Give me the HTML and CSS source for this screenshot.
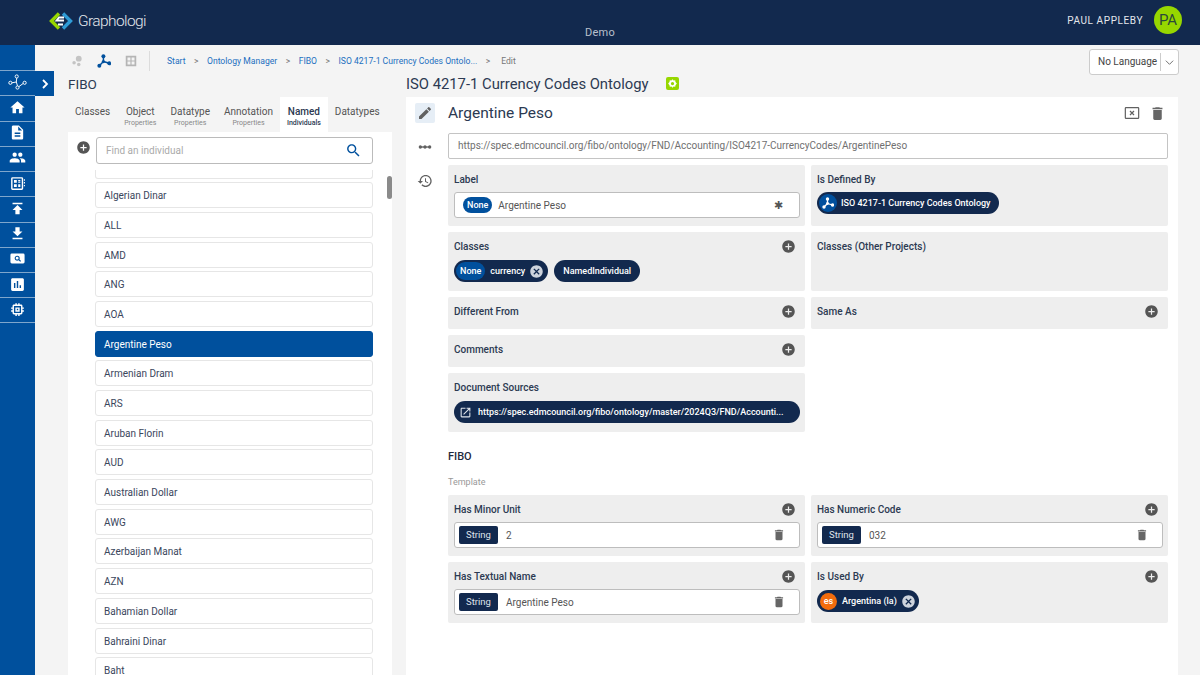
FILE: index.html
```html
<!DOCTYPE html>
<html lang="en">
<head>
  <meta charset="UTF-8">
  <meta name="viewport" content="width=device-width, initial-scale=1">
  <title>Graphologi</title>
  <link rel="stylesheet" href="styles.css">
</head>
<body>
  <svg class="icon-defs" xmlns="http://www.w3.org/2000/svg">
    <symbol id="i-add" viewBox="0 0 24 24"><path d="M12 2C6.48 2 2 6.48 2 12s4.48 10 10 10 10-4.48 10-10S17.52 2 12 2zm5 11h-4v4h-2v-4H7v-2h4V7h2v4h4v2z"/></symbol>
    <symbol id="i-home" viewBox="0 0 24 24"><path d="M10 20v-6h4v6h5v-8h3L12 3 2 12h3v8z"/></symbol>
    <symbol id="i-doc" viewBox="0 0 24 24"><path d="M14 2H6c-1.1 0-1.99.9-1.99 2L4 20c0 1.1.89 2 1.99 2H18c1.1 0 2-.9 2-2V8l-6-6zm2 16H8v-2h8v2zm0-4H8v-2h8v2zm-3-5V3.5L18.5 9H13z"/></symbol>
    <symbol id="i-people" viewBox="0 0 24 24"><path d="M16 11c1.66 0 2.99-1.34 2.99-3S17.66 5 16 5c-1.66 0-3 1.34-3 3s1.34 3 3 3zm-8 0c1.66 0 2.99-1.34 2.99-3S9.66 5 8 5C6.34 5 5 6.34 5 8s1.34 3 3 3zm0 2c-2.33 0-7 1.17-7 3.5V19h14v-2.5c0-2.33-4.67-3.5-7-3.5zm8 0c-.29 0-.62.02-.97.05 1.16.84 1.97 1.97 1.97 3.45V19h6v-2.5c0-2.33-4.67-3.5-7-3.5z"/></symbol>
    <symbol id="i-up" viewBox="0 0 24 24"><path d="M5 4v2h14V4H5zm0 10h4v6h6v-6h4l-7-7-7 7z"/></symbol>
    <symbol id="i-down" viewBox="0 0 24 24"><path d="M19 9h-4V3H9v6H5l7 7 7-7zM5 18v2h14v-2H5z"/></symbol>
    <symbol id="i-chart" viewBox="0 0 24 24"><path d="M19 3H5c-1.1 0-2 .9-2 2v14c0 1.1.9 2 2 2h14c1.1 0 2-.9 2-2V5c0-1.1-.9-2-2-2zM9 17H7v-7h2v7zm4 0h-2V7h2v10zm4 0h-2v-4h2v4z"/></symbol>
    <symbol id="i-chip" viewBox="0 0 24 24"><path d="M15 9H9v6h6V9zm-2 4h-2v-2h2v2zm8-2V9h-2V7c0-1.1-.9-2-2-2h-2V3h-2v2h-2V3H9v2H7c-1.1 0-2 .9-2 2v2H3v2h2v2H3v2h2v2c0 1.1.9 2 2 2h2v2h2v-2h2v2h2v-2h2c1.1 0 2-.9 2-2v-2h2v-2h-2v-2h2zm-4 6H7V7h10v10z"/></symbol>
    <symbol id="i-search" viewBox="0 0 24 24"><path d="M15.5 14h-.79l-.28-.27C15.41 12.59 16 11.11 16 9.5 16 5.91 13.09 3 9.5 3S3 5.91 3 9.5 5.91 16 9.5 16c1.61 0 3.09-.59 4.23-1.57l.27.28v.79l5 4.99L20.49 19l-4.99-5zm-6 0C7.01 14 5 11.99 5 9.5S7.01 5 9.5 5 14 7.01 14 9.5 11.99 14 9.5 14z"/></symbol>
    <symbol id="i-edit" viewBox="0 0 24 24"><path d="M3 17.25V21h3.75L17.81 9.94l-3.75-3.75L3 17.25zM20.71 7.04c.39-.39.39-1.02 0-1.41l-2.34-2.34c-.39-.39-1.02-.39-1.41 0l-1.83 1.83 3.75 3.75 1.83-1.83z"/></symbol>
    <symbol id="i-history" viewBox="0 0 24 24"><path d="M13 3c-4.97 0-9 4.03-9 9H1l3.89 3.89.07.14L9 12H6c0-3.87 3.13-7 7-7s7 3.13 7 7-3.13 7-7 7c-1.93 0-3.68-.79-4.94-2.06l-1.42 1.42C8.27 19.99 10.51 21 13 21c4.97 0 9-4.03 9-9s-4.03-9-9-9zm-1 5v5l4.28 2.54.72-1.21-3.5-2.08V8H12z"/></symbol>
    <symbol id="i-trash" viewBox="0 0 24 24"><path d="M6 19c0 1.1.9 2 2 2h8c1.1 0 2-.9 2-2V7H6v12zM19 4h-3.5l-1-1h-5l-1 1H5v2h14V4z"/></symbol>
    <symbol id="i-cancel" viewBox="0 0 24 24"><path d="M12 2C6.47 2 2 6.47 2 12s4.47 10 10 10 10-4.47 10-10S17.53 2 12 2zm5 13.59L15.59 17 12 13.41 8.41 17 7 15.59 10.59 12 7 8.41 8.41 7 12 10.59 15.59 7 17 8.41 13.41 12 17 15.59z"/></symbol>
    <symbol id="i-open" viewBox="0 0 24 24"><path d="M19 19H5V5h7V3H5c-1.11 0-2 .9-2 2v14c0 1.1.89 2 2 2h14c1.1 0 2-.9 2-2v-7h-2v7zM14 3v2h3.59l-9.83 9.83 1.41 1.41L19 6.41V10h2V3h-7z"/></symbol>
    <symbol id="i-graph" viewBox="0 0 24 24"><path d="M11 13L11 4M11 13L4 20M11 13L21 16" stroke="currentColor" stroke-width="2.6" fill="none"/><circle cx="11" cy="4" r="3.4"/><circle cx="4" cy="20" r="3.4"/><circle cx="21" cy="16" r="3.4"/><circle cx="11" cy="13" r="2.8"/></symbol>
  </svg>

  <header class="topbar">
    <div class="brand">
      <svg class="logo line" viewBox="0 0 24 20">
        <path d="M10 2.5L2.5 10l7.5 7.5" stroke="#97d700" stroke-width="3.4"/>
        <path d="M14 2.5L21.5 10 14 17.5" stroke="#2f9bd6" stroke-width="3.4"/>
        <path d="M15 6.5H10L7.5 9.5H15M9 13.5H14" stroke="#ffffff" stroke-width="1.8"/>
      </svg>
      <span class="brand-name">Graphologi</span>
    </div>
    <div class="project">Demo</div>
    <div class="user">
      <span class="user-name">PAUL APPLEBY</span>
      <span class="avatar">PA</span>
    </div>
  </header>

  <div class="layout">
    <nav class="sidebar">
      <a class="side-item">
        <svg class="side-ontology line" viewBox="0 0 24 20" stroke="#fff" stroke-width="1.2"><circle cx="11" cy="3" r="2"/><circle cx="3" cy="11" r="2"/><circle cx="12" cy="17" r="2"/><circle cx="21" cy="11" r="2"/><path d="M11 5l-.5 5L5 11M10.500 10L12 15M13.500 16L19 12"/></svg>
        <span class="side-expand"><svg class="line" viewBox="0 0 12 12" stroke="#fff" stroke-width="1.8"><path d="M4 2l4 4-4 4"/></svg></span>
      </a>
      <a class="side-item"><svg><use href="#i-home"/></svg></a>
      <a class="side-item"><svg><use href="#i-doc"/></svg></a>
      <a class="side-item"><svg><use href="#i-people"/></svg></a>
      <a class="side-item">
        <svg viewBox="0 0 24 24"><path fill-rule="evenodd" d="M5 3h13a2 2 0 012 2v14a2 2 0 01-2 2H5a2 2 0 01-2-2V5a2 2 0 012-2zm0 2v14h13V5H5zm2 2h4v4H7V7zm6 0h3v2h-3V7zm0 3h3v1h-3v-1zm-6 3h4v4H7v-4zm6 0h3v4h-3v-4zm8-7h1.500v2H21V6zm0 4h1.500v2H21v-2zm0 4h1.500v2H21v-2z"/></svg>
      </a>
      <a class="side-item"><svg><use href="#i-up"/></svg></a>
      <a class="side-item"><svg><use href="#i-down"/></svg></a>
      <a class="side-item">
        <svg viewBox="0 0 24 24"><path fill-rule="evenodd" d="M4 5h16a2 2 0 012 2v10a2 2 0 01-2 2H4a2 2 0 01-2-2V7a2 2 0 012-2zm7.500 3a3.500 3.500 0 102 6.400l2.300 2.300 1.200-1.200-2.300-2.300A3.500 3.500 0 0011.500 8zm0 1.500a2 2 0 110 4 2 2 0 010-4z"/></svg>
      </a>
      <a class="side-item"><svg><use href="#i-chart"/></svg></a>
      <a class="side-item"><svg><use href="#i-chip"/></svg></a>
    </nav>

    <div class="content">
      <div class="toolbar">
        <div class="view-icons">
          <svg class="view-icon" viewBox="0 0 24 24"><circle cx="15" cy="8" r="5" fill="#c4c4c4"/><circle cx="7" cy="15" r="3" fill="#c4c4c4"/><circle cx="15" cy="18" r="3" fill="#c4c4c4"/></svg>
          <svg class="view-icon active"><use href="#i-graph"/></svg>
          <svg class="view-icon" viewBox="0 0 24 24"><path fill="#b5b5b5" fill-rule="evenodd" d="M3 3h18v18H3V3zm3 3v5h5V6H6zm7 0v5h5V6h-5zm-7 7v5h5v-5H6zm7 0v5h5v-5h-5z"/></svg>
        </div>
        <ol class="crumbs">
          <li><a>Start</a></li>
          <li><a>Ontology Manager</a></li>
          <li><a>FIBO</a></li>
          <li><a>ISO 4217-1 Currency Codes Ontolo...</a></li>
          <li class="current">Edit</li>
        </ol>
        <div class="lang-select">
          <span class="lang-value">No Language</span>
          <svg class="line" viewBox="0 0 12 12" stroke="#666" stroke-width="1"><path d="M2 4l4 4 4-4"/></svg>
        </div>
      </div>

      <div class="columns">
        <section class="left">
          <h2 class="panel-title left-title">FIBO</h2>
          <div class="tabs">
            <div class="tab">Classes</div>
            <div class="tab">Object<small>Properties</small></div>
            <div class="tab">Datatype<small>Properties</small></div>
            <div class="tab">Annotation<small>Properties</small></div>
            <div class="tab active">Named<small>Individuals</small></div>
            <div class="tab">Datatypes</div>
          </div>
          <div class="list-panel">
            <div class="search-row">
              <svg class="add-icon"><use href="#i-add"/></svg>
              <div class="search-box">
                <span>Find an individual</span>
                <svg><use href="#i-search"/></svg>
              </div>
            </div>
            <div class="list-scroll">
              <ul class="list">
                <li></li>
                <li>Algerian Dinar</li>
                <li>ALL</li>
                <li>AMD</li>
                <li>ANG</li>
                <li>AOA</li>
                <li class="selected">Argentine Peso</li>
                <li>Armenian Dram</li>
                <li>ARS</li>
                <li>Aruban Florin</li>
                <li>AUD</li>
                <li>Australian Dollar</li>
                <li>AWG</li>
                <li>Azerbaijan Manat</li>
                <li>AZN</li>
                <li>Bahamian Dollar</li>
                <li>Bahraini Dinar</li>
                <li>Baht</li>
              </ul>
              <div class="scroll-thumb"></div>
            </div>
          </div>
        </section>

        <section class="right">
          <div class="title-row">
            <h2 class="panel-title">ISO 4217-1 Currency Codes Ontology</h2>
            <span class="green-badge"><svg viewBox="0 0 24 24"><path fill="#fff" fill-rule="evenodd" d="M12 4l2 2.500 3-.5.500 3 2.500 3-2.500 3-.500 3-3-.5L12 20l-2-2.500-3 .5-.500-3L4 12l2.500-3 .500-3 3 .5L12 4zm0 5a3 3 0 100 6 3 3 0 000-6z"/></svg></span>
          </div>
          <div class="editor">
            <div class="rail">
              <span class="rail-btn active"><svg><use href="#i-edit"/></svg></span>
              <span class="rail-btn"><svg viewBox="0 0 24 24"><circle cx="5" cy="12" r="2.500"/><circle cx="12" cy="12" r="2.500"/><circle cx="19" cy="12" r="2.500"/><path d="M5 11h14v2H5z"/></svg></span>
              <span class="rail-btn"><svg><use href="#i-history"/></svg></span>
            </div>
            <div class="form">
              <div class="form-head">
                <h1>Argentine Peso</h1>
                <svg class="close-box line" viewBox="0 0 24 24" stroke="#616161" stroke-width="1.800"><rect x="2" y="4" width="20" height="16" rx="1"/><path d="M9 9l6 6M15 9l-6 6"/></svg>
                <svg class="trash big"><use href="#i-trash"/></svg>
              </div>
              <div class="iri">https://spec.edmcouncil.org/fibo/ontology/FND/Accounting/ISO4217-CurrencyCodes/ArgentinePeso</div>

              <div class="card-grid">
                <div class="card">
                  <div class="card-head">Label</div>
                  <div class="value-box">
                    <span class="pill none">None</span>
                    <span class="value-text">Argentine Peso</span>
                    <span class="star">✱</span>
                  </div>
                </div>
                <div class="card">
                  <div class="card-head">Is Defined By</div>
                  <div class="chips tight">
                    <span class="chip has-icon"><span class="chip-graph"><svg><use href="#i-graph"/></svg></span>ISO 4217-1 Currency Codes Ontology</span>
                  </div>
                </div>
                <div class="card">
                  <div class="card-head">Classes<svg class="add-icon"><use href="#i-add"/></svg></div>
                  <div class="chips">
                    <span class="chip has-none"><span class="pill none">None</span>currency<svg class="chip-x"><use href="#i-cancel"/></svg></span>
                    <span class="chip">NamedIndividual</span>
                  </div>
                </div>
                <div class="card">
                  <div class="card-head">Classes (Other Projects)</div>
                </div>
                <div class="card">
                  <div class="card-head">Different From<svg class="add-icon"><use href="#i-add"/></svg></div>
                </div>
                <div class="card">
                  <div class="card-head">Same As<svg class="add-icon"><use href="#i-add"/></svg></div>
                </div>
                <div class="card">
                  <div class="card-head">Comments<svg class="add-icon"><use href="#i-add"/></svg></div>
                </div>
                <div></div>
                <div class="card">
                  <div class="card-head">Document Sources</div>
                  <div class="chips">
                    <span class="chip wide"><svg class="chip-open"><use href="#i-open"/></svg>https://spec.edmcouncil.org/fibo/ontology/master/2024Q3/FND/Accounti...</span>
                  </div>
                </div>
              </div>

              <h3 class="section-title">FIBO</h3>
              <div class="section-sub">Template</div>

              <div class="card-grid">
                <div class="card">
                  <div class="card-head">Has Minor Unit<svg class="add-icon"><use href="#i-add"/></svg></div>
                  <div class="value-box">
                    <span class="type-tag">String</span>
                    <span class="value-text">2</span>
                    <svg class="trash"><use href="#i-trash"/></svg>
                  </div>
                </div>
                <div class="card">
                  <div class="card-head">Has Numeric Code<svg class="add-icon"><use href="#i-add"/></svg></div>
                  <div class="value-box">
                    <span class="type-tag">String</span>
                    <span class="value-text">032</span>
                    <svg class="trash"><use href="#i-trash"/></svg>
                  </div>
                </div>
                <div class="card">
                  <div class="card-head">Has Textual Name<svg class="add-icon"><use href="#i-add"/></svg></div>
                  <div class="value-box">
                    <span class="type-tag">String</span>
                    <span class="value-text">Argentine Peso</span>
                    <svg class="trash"><use href="#i-trash"/></svg>
                  </div>
                </div>
                <div class="card">
                  <div class="card-head">Is Used By<svg class="add-icon"><use href="#i-add"/></svg></div>
                  <div class="chips">
                    <span class="chip has-lang"><span class="lang-dot">es</span>Argentina (la)<svg class="chip-x"><use href="#i-cancel"/></svg></span>
                  </div>
                </div>
              </div>
            </div>
          </div>
        </section>
      </div>
    </div>
  </div>
</body>
</html>
```

FILE: styles.css
```css
* {
  box-sizing: border-box;
}

html, body {
  height: 100%;
}

body {
  margin: 0;
  overflow: hidden;
  font-family: Roboto, "Liberation Sans", sans-serif;
  font-size: 10px;
  color: #2c3a52;
  background: #f4f4f4;
  display: flex;
  flex-direction: column;
}

.icon-defs {
  display: none;
}

svg {
  fill: currentColor;
  display: block;
  flex: none;
}

svg.line {
  fill: none;
}

/* top bar */
.topbar {
  height: 45px;
  flex: none;
  background: #12294e;
  color: #fff;
  display: flex;
  align-items: center;
  justify-content: space-between;
  padding: 0 18px 0 49px;
  position: relative;
}

.brand {
  display: flex;
  align-items: center;
  gap: 5px;
  margin-top: -4px;
}

.logo {
  width: 24px;
  height: 20px;
}

.brand-name {
  font-weight: 300;
  font-size: 15.5px;
  letter-spacing: -0.6px;
  color: #e4e7ec;
}

.project {
  position: absolute;
  left: 0;
  right: 0;
  top: 26px;
  text-align: center;
  font-size: 11px;
  letter-spacing: 0.3px;
  color: #b9c0cc;
}

.user {
  display: flex;
  align-items: center;
  gap: 11px;
  margin-top: -5px;
}

.user-name {
  font-size: 10px;
  letter-spacing: 0.6px;
  color: #e4e7ec;
}

.avatar {
  width: 28px;
  height: 28px;
  border-radius: 50%;
  background: #97d700;
  color: #2b4a3a;
  font-size: 15px;
  display: flex;
  align-items: center;
  justify-content: center;
}

/* sidebar */
.layout {
  flex: 1;
  display: flex;
  min-height: 0;
}

.sidebar {
  width: 35px;
  flex: none;
  background: #00509d;
  padding-top: 25px;
}

.side-item {
  height: 25.27px;
  padding-bottom: 2px;
  border-top: 1px solid #7fa6cc;
  color: #fff;
  display: flex;
  align-items: center;
  justify-content: center;
  position: relative;
}

.side-item:last-child {
  border-bottom: 1px solid #7fa6cc;
}

.side-item svg {
  width: 17px;
  height: 17px;
}

.side-item svg.side-ontology {
  width: 19px;
  height: 16px;
}

.side-expand {
  position: absolute;
  left: 35px;
  top: 0;
  width: 19px;
  height: 25px;
  background: #00509d;
  display: flex;
  align-items: center;
  justify-content: center;
}

.side-item .side-expand svg {
  width: 12px;
  height: 12px;
}

/* content */
.content {
  flex: 1;
  min-width: 0;
  display: flex;
  flex-direction: column;
}

.toolbar {
  height: 31px;
  flex: none;
  padding: 0 21px 0 35px;
  display: flex;
  align-items: center;
}

.view-icons {
  display: flex;
  align-items: center;
  gap: 13px;
  padding-right: 11px;
  height: 20px;
  border-right: 1px solid #dcdcdc;
}

.view-icon {
  width: 14px;
  height: 14px;
  color: #00509d;
}

.crumbs {
  list-style: none;
  margin: 0 0 0 17px;
  padding: 0;
  display: flex;
  font-size: 8.6px;
  flex: 1;
}

.crumbs li + li::before {
  content: ">";
  margin: 0 8.5px;
  color: #777;
  font-size: 8.5px;
}

.crumbs li.current::before {
  margin-right: 11px;
}

.crumbs a {
  color: #1c6fc0;
}

.crumbs .current {
  color: #777;
}

.lang-select {
  width: 90px;
  height: 26px;
  margin-top: 3px;
  background: #fff;
  border: 1px solid #ccc;
  border-radius: 3px;
  display: flex;
  align-items: center;
  padding: 0 3px 0 8px;
  font-size: 10px;
  color: #444;
}

.lang-value {
  flex: 1;
  border-right: 1px solid #ccc;
  line-height: 18px;
  white-space: nowrap;
}

.lang-select svg {
  width: 11px;
  height: 11px;
  margin-left: 3px;
}

.columns {
  flex: 1;
  min-height: 0;
  display: flex;
  gap: 14px;
  padding: 0 22px 0 33px;
}

.panel-title {
  margin: 0;
  font-weight: 400;
  font-size: 14.8px;
  line-height: 16px;
  color: #2c3a52;
}

/* left column */
.left {
  width: 324px;
  flex: none;
  display: flex;
  flex-direction: column;
  min-height: 0;
}

.left-title {
  font-size: 13.5px;
  height: 21px;
}

.tabs {
  display: flex;
  height: 35px;
  flex: none;
}

.tab {
  padding: 9px 7px 0;
  text-align: center;
  font-size: 10px;
  line-height: 12px;
  color: #555;
  white-space: nowrap;
}

.tab small {
  display: block;
  margin-top: 1px;
  font-size: 7px;
  line-height: 9px;
  color: #888;
}

.tab.active {
  background: #fff;
  color: #2c3a52;
  font-weight: 500;
}

.tab.active small {
  color: #2c3a52;
}

.list-panel {
  flex: 1;
  min-height: 0;
  background: #fff;
  display: flex;
  flex-direction: column;
}

.search-row {
  display: flex;
  align-items: flex-start;
  flex: none;
  padding: 5px 19px 0 8px;
  gap: 5px;
}

.search-row .add-icon {
  margin-top: 3px;
}

.add-icon {
  width: 15px;
  height: 15px;
  color: #555;
}

.search-box {
  flex: 1;
  height: 27px;
  border: 1px solid #bbb;
  border-radius: 3px;
  display: flex;
  align-items: center;
  justify-content: space-between;
  padding: 0 10px 0 9px;
  color: #aaa;
}

.search-box svg {
  width: 17px;
  height: 17px;
  color: #00509d;
}

.list-scroll {
  flex: 1;
  min-height: 0;
  overflow: hidden;
  margin-top: 6px;
  position: relative;
}

.list {
  list-style: none;
  margin: 0;
  padding: 0 19px 0 27px;
}

.list li {
  height: 26px;
  margin-bottom: 3.7px;
  padding: 0 8px;
  line-height: 25px;
  background: #fff;
  border: 1px solid #e6e6e6;
  border-radius: 3px;
  color: #3a465c;
}

.list li:first-child {
  height: 8.5px;
  border-top: 0;
  border-radius: 0 0 3px 3px;
}

.list li.selected {
  background: #00509d;
  border-color: #00509d;
  color: #fff;
}

.scroll-thumb {
  position: absolute;
  left: 319px;
  top: 6px;
  width: 5px;
  height: 23px;
  border-radius: 3px;
  background: #8a8a8a;
}

/* right column */
.right {
  flex: 1;
  min-width: 0;
  display: flex;
  flex-direction: column;
  min-height: 0;
}

.title-row {
  display: flex;
  align-items: flex-start;
  gap: 17px;
  height: 21px;
  flex: none;
}

.green-badge {
  width: 13px;
  height: 13px;
  margin-top: 1px;
  border-radius: 2px;
  background: #97d700;
}

.editor {
  flex: 1;
  min-height: 0;
  background: #fff;
  display: flex;
}

.rail {
  width: 42px;
  flex: none;
  padding: 6px 0 0 9px;
  display: flex;
  flex-direction: column;
  gap: 14px;
}

.rail-btn {
  width: 20px;
  height: 20px;
  border-radius: 2px;
  color: #616161;
  display: flex;
  align-items: center;
  justify-content: center;
}

.rail-btn svg {
  width: 16px;
  height: 16px;
}

.rail-btn.active {
  background: #e6eef6;
}

.form {
  flex: 1;
  min-width: 0;
  padding-right: 10px;
}

.form-head {
  height: 36px;
  padding-bottom: 4px;
  display: flex;
  align-items: center;
  gap: 9px;
}

.form-head h1 {
  flex: 1;
  margin: 0;
  font-weight: 400;
  font-size: 15.5px;
  color: #2c3a52;
}

.close-box {
  width: 16px;
  height: 16px;
}

.trash {
  width: 14px;
  height: 14px;
  color: #666;
}

.trash.big {
  width: 17px;
  height: 17px;
  margin-right: 2px;
}

.iri {
  height: 26px;
  border: 1px solid #c4c4c4;
  border-radius: 2px;
  padding: 0 9px;
  line-height: 24px;
  font-size: 10px;
  color: #707070;
  white-space: nowrap;
  margin-bottom: 6px;
}

.card-grid {
  display: grid;
  grid-template-columns: 357px 357px;
  gap: 6px;
}

.card {
  background: #eeeeee;
  border-radius: 2px;
  padding: 6px 5px 6px 6px;
}

.card-head {
  height: 20px;
  padding: 0 4px 4px 0;
  display: flex;
  align-items: center;
  justify-content: space-between;
  font-weight: 500;
  font-size: 10px;
  color: #2c3a52;
}

.value-box {
  height: 26px;
  margin: 1px 0 2px;
  background: #fff;
  border: 1px solid #bdbdbd;
  border-radius: 3px;
  display: flex;
  align-items: center;
  padding: 0 13px 0 4px;
}

.value-text {
  flex: 1;
  margin-left: 8px;
  color: #555;
  font-size: 10px;
}

.star {
  margin-right: 3px;
  font-size: 11px;
  color: #555;
}

.value-box .pill {
  margin-left: 4px;
}

.value-box .pill + .value-text {
  margin-left: 6px;
}

.pill {
  border-radius: 9px;
  font-size: 9px;
  font-weight: 500;
  color: #fff;
  padding: 0 4px;
  line-height: 16px;
}

.pill.none {
  background: #00509d;
}

.chips {
  display: flex;
  gap: 6px;
  margin: 2px 0 3px;
  height: 22px;
}

.chips.tight {
  margin-top: 1px;
}

.chip {
  height: 22px;
  border-radius: 11px;
  background: #12294e;
  color: #fff;
  font-size: 9px;
  font-weight: 500;
  padding: 0 9px;
  display: flex;
  align-items: center;
  white-space: nowrap;
}

.chip.has-none {
  padding: 0 4px 0 2px;
}

.chip.has-none .pill {
  line-height: 18px;
  margin-right: 5px;
}

.chip-x {
  width: 15px;
  height: 15px;
  margin-left: 4px;
  color: #cdd3dc;
}

.chip.has-icon {
  padding: 0 8px 0 2px;
}

.chip-graph {
  width: 18px;
  height: 18px;
  margin-right: 4px;
  border-radius: 50%;
  background: #00509d;
  display: flex;
  align-items: center;
  justify-content: center;
}

.chip-graph svg {
  width: 12px;
  height: 12px;
}

.chip.wide {
  width: 100%;
  padding: 0 9px 0 5px;
}

.chip-open {
  width: 13px;
  height: 13px;
  margin-right: 6px;
  color: #dfe3ea;
}

.chip.has-lang {
  padding: 0 3px;
}

.lang-dot {
  width: 17px;
  height: 17px;
  margin-right: 5px;
  border-radius: 50%;
  background: #f26c0d;
  display: flex;
  align-items: center;
  justify-content: center;
  font-size: 9px;
}

.type-tag {
  width: 39px;
  height: 18px;
  background: #12294e;
  border-radius: 2px;
  color: #dfe3ea;
  font-size: 9.5px;
  text-align: center;
  line-height: 18px;
}

.section-title {
  margin: 17px 0 0;
  font-size: 11px;
  font-weight: 500;
  line-height: 16px;
  color: #1f2a3d;
}

.section-sub {
  margin-top: 11px;
  margin-bottom: 6px;
  line-height: 13px;
  font-size: 9px;
  color: #999;
}
```
